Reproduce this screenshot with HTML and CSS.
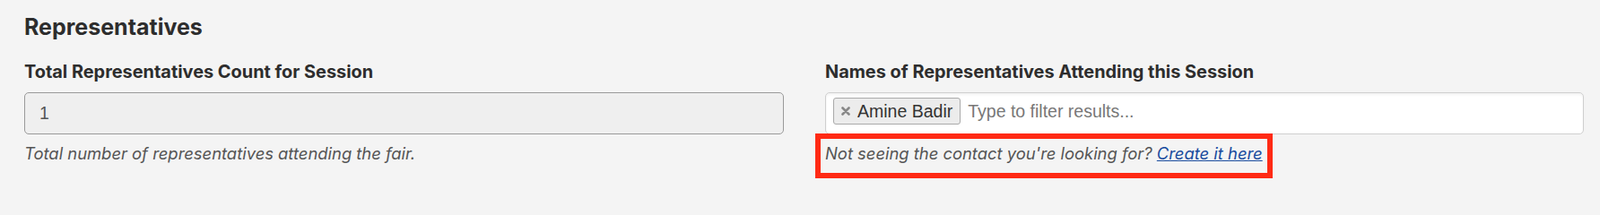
FILE: index.html
```html
<!DOCTYPE html>
<html lang="en">
<head>
<meta charset="utf-8">
<title>Representatives</title>
<link rel="stylesheet" href="styles.css">
</head>
<body>
<section class="panel">
  <h2 class="panel-title">Representatives</h2>
  <div class="grid">
    <div class="field">
      <label class="field-label">Total Representatives Count for Session</label>
      <div class="text-input readonly">1</div>
      <p class="help">Total number of representatives attending the fair.</p>
    </div>
    <div class="field">
      <label class="field-label">Names of Representatives Attending this Session</label>
      <div class="multi-select">
        <span class="chip"><svg class="chip-x" viewBox="0 0 10 10" width="10" height="10" aria-hidden="true"><path d="M1.5 1.5 L8.5 8.5 M8.5 1.5 L1.5 8.5" stroke="#888" stroke-width="2.6" stroke-linecap="round"/></svg>Amine Badir</span>
        <span class="placeholder">Type to filter results...</span>
      </div>
      <p class="help"><span class="help-inner">Not seeing the contact you're looking for? <a class="link" href="#">Create it here</a><span class="annot"></span></span></p>
    </div>
  </div>
</section>
</body>
</html>
```
FILE: styles.css
```css
* { box-sizing: border-box; }
html, body { margin: 0; padding: 0; }
body {
  background: #f4f4f4;
  width: 1784px;
  height: 224px;
  overflow: hidden;
  font-family: Inter, "Liberation Sans", sans-serif;
  color: #2b2b2b;
}
.panel {
  padding: 15px 19px 0 27px;
}
.panel-title {
  margin: 0;
  font-size: 25px;
  line-height: 30px;
  font-weight: 700;
  color: #2d2d2d;
}
.grid {
  display: grid;
  grid-template-columns: 847px 846px;
  column-gap: 46px;
  margin-top: 24px;
}
.field { display: flex; flex-direction: column; }
.field-label {
  font-size: 19.9px;
  line-height: 23px;
  font-weight: 700;
  color: #2d2d2d;
}
.text-input {
  margin-top: 11px;
  height: 47px;
  border: 1px solid #9a9a9a;
  border-radius: 5px;
  background: #efefef;
  padding: 0 16px;
  display: flex;
  align-items: center;
  font-family: "Liberation Sans", Arial, sans-serif;
  font-size: 19.5px;
  color: #555;
}
.multi-select {
  margin-top: 11px;
  height: 47px;
  border: 1px solid #cfcfcf;
  border-radius: 5px;
  background: #fff;
  box-shadow: inset 0 2px 3px rgba(0,0,0,0.05);
  padding: 5px 8px;
  display: flex;
  align-items: flex-start;
  gap: 8px;
  font-family: "Liberation Sans", Arial, sans-serif;
  font-size: 19.5px;
}
.chip {
  display: inline-flex;
  align-items: center;
  height: 30px;
  padding: 0 8px;
  border: 1px solid #aaa;
  border-radius: 3px;
  background: #ececec;
  color: #333;
  gap: 8px;
}
.chip-x {
  display: block;
  flex: none;
}
.placeholder {
  color: #777;
  line-height: 30px;
  height: 30px;
}
.help {
  margin: 10px 0 0 0;
  font-size: 18.4px;
  line-height: 22px;
  font-style: italic;
  color: #555;
}
.help-inner { position: relative; display: inline-block; }
.link { color: #1a4c9e; text-decoration: underline; }
.annot {
  position: absolute;
  left: -11px;
  top: -11px;
  right: -11px;
  bottom: -17px;
  border: 6px solid #ff2a14;
  pointer-events: none;
}
```
